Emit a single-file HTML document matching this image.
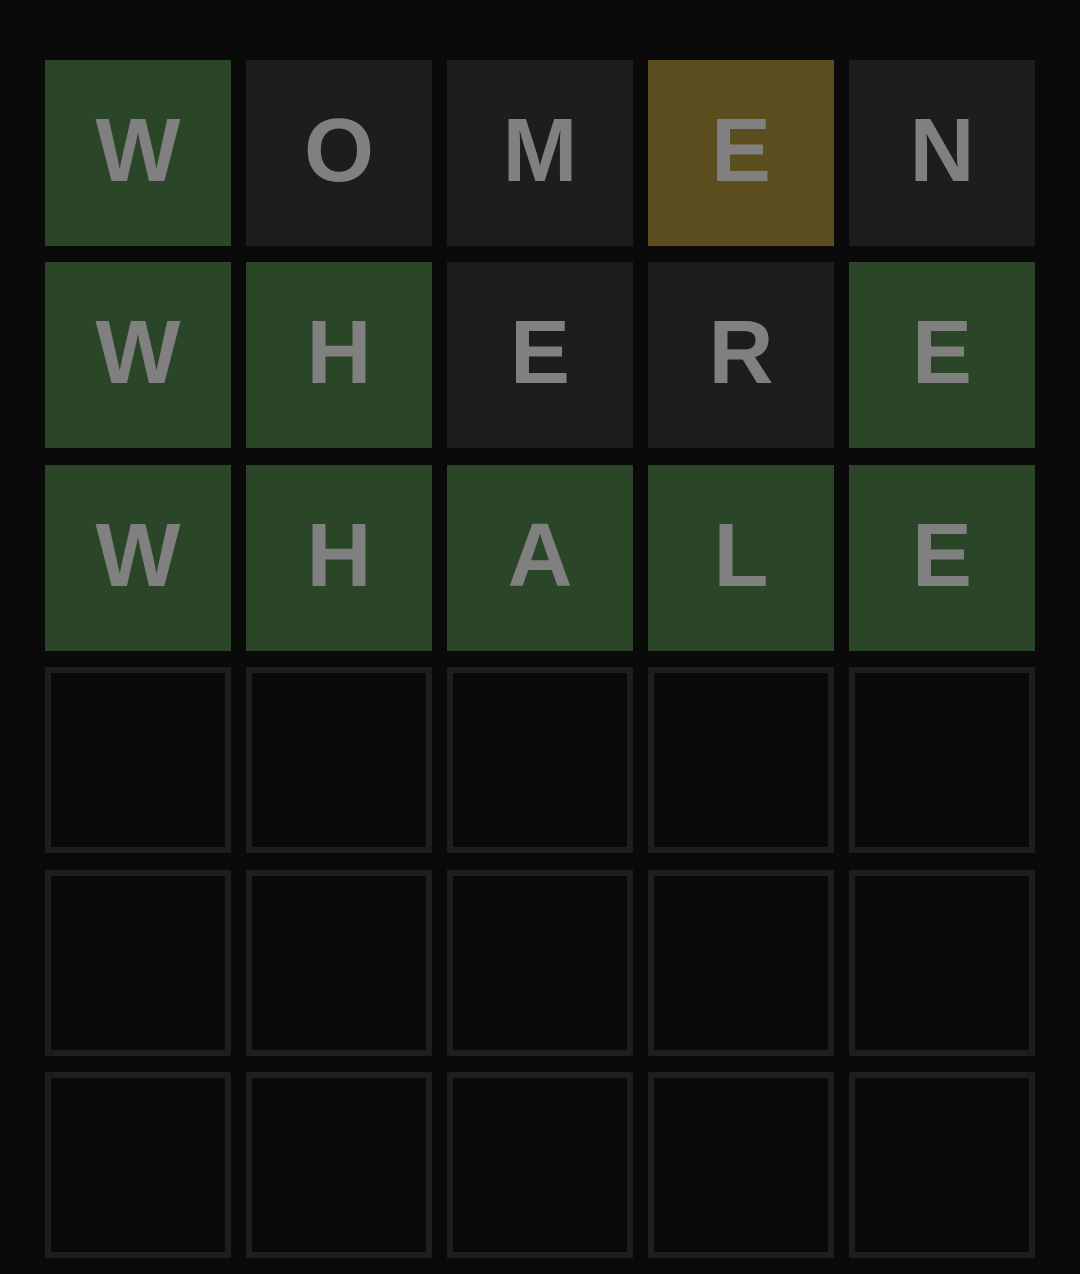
<!DOCTYPE html>
<html><head><style>
body{margin:0;background:#0a0a0a;width:1080px;height:1274px;overflow:hidden;position:relative;font-family:"Liberation Sans",sans-serif}
.t{position:absolute;width:186px;height:186px;box-sizing:border-box;display:flex;align-items:center;justify-content:center;font-weight:bold;font-size:90px;color:#808080;padding-bottom:4px}
.g{background:#2a4527}.y{background:#5c4f1f}.d{background:#1d1d1d}.e{border:6px solid #1e1e1e}
</style></head><body>
<script>
var rows=[["W","O","M","E","N"],["W","H","E","R","E"],["W","H","A","L","E"],null,null,null];
var cls=[["g","d","d","y","d"],["g","g","d","d","g"],["g","g","g","g","g"]];
var tops=[60,262,465,667,870,1072],lefts=[45,246,447,648,849];
for(var r=0;r<6;r++)for(var c=0;c<5;c++){
document.write('<div class="t '+(rows[r]?cls[r][c]:'e')+'" style="top:'+tops[r]+'px;left:'+lefts[c]+'px">'+(rows[r]?rows[r][c]:'')+'</div>');}
</script>
</body></html>
